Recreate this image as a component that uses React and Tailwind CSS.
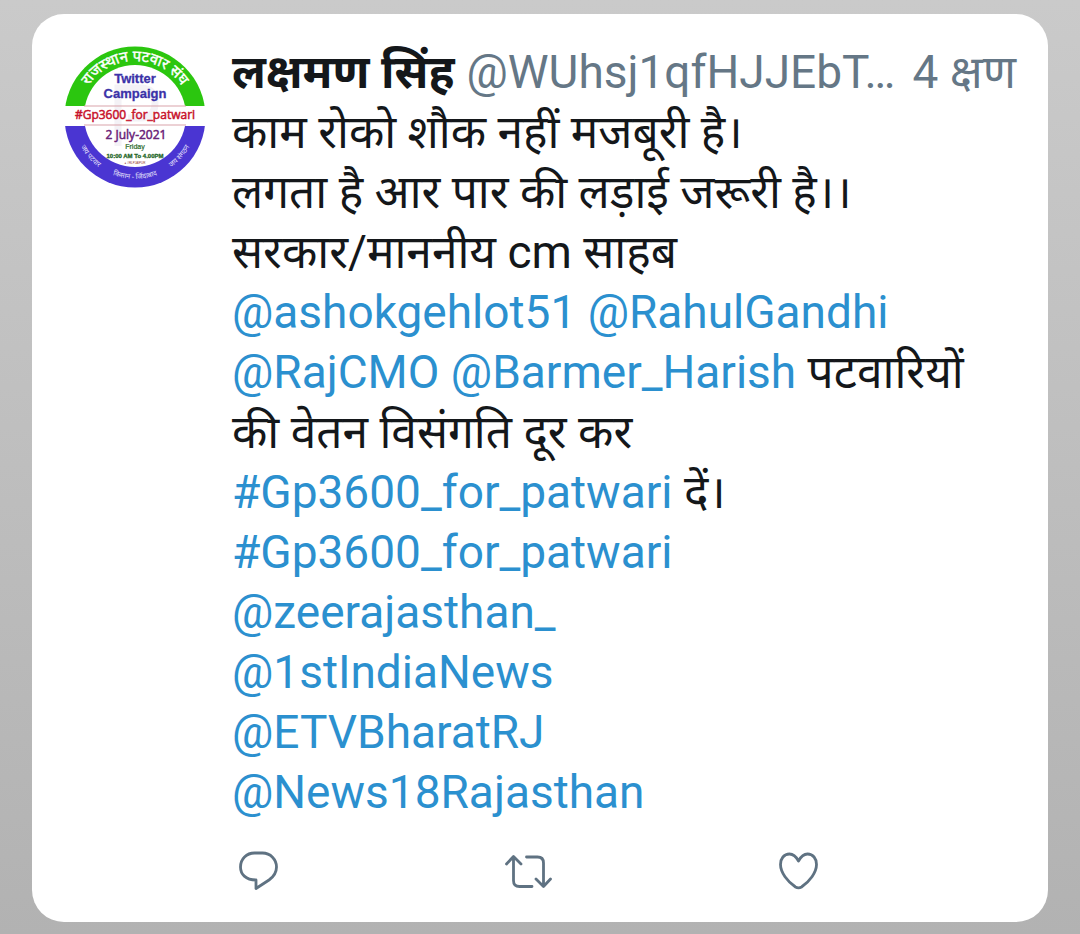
import React from "react";

function Mention({ children }) {
  return (
    <a href="#mention" className="text-[#2b90cf]">
      {children}
    </a>
  );
}

function CampaignAvatar() {
  return (
    <svg viewBox="0 0 142 142" className="block size-[142px] shrink-0" role="img" aria-label="Twitter Campaign">
      <defs>
        <clipPath id="disc">
          <circle cx="71" cy="71" r="70.5" />
        </clipPath>
        <path id="topArc" d="M15 71 A56 56 0 0 1 127 71" />
        <path id="bottomArc" d="M9 71 A62 62 0 0 0 133 71" />
      </defs>
      <g clipPath="url(#disc)">
        <rect width="142" height="142" fill="#fff" />
        <rect width="142" height="60" fill="#2bc60f" />
        <rect y="80" width="142" height="62" fill="#4a35d2" />
        <circle cx="71" cy="70" r="51" fill="#fff" />
        <rect y="60" width="142" height="20" fill="#fff" />
      </g>
      <path d="M54 100V42H76Q91 42 91 57T76 72H64" fill="none" stroke="#f4f2f6" strokeWidth="7" />
      <path d="M20 60H122M20 79H122" stroke="#d9a3aa" strokeWidth="1" />
      <g fontFamily="'Noto Sans', sans-serif" fill="#fff" textAnchor="middle">
        <text fontSize="15" stroke="#fff" strokeWidth="0.4">
          <textPath href="#topArc" startOffset="50%">राजस्थान पटवार संघ</textPath>
        </text>
        <g fontSize="7" fill="#e4e0fa">
          <text>
            <textPath href="#bottomArc" startOffset="23%">जय पटवार</textPath>
          </text>
          <text>
            <textPath href="#bottomArc" startOffset="50%">किसान - जिंदाबाद</textPath>
          </text>
          <text>
            <textPath href="#bottomArc" startOffset="77%">जय संगठन</textPath>
          </text>
        </g>
      </g>
      <g textAnchor="middle">
        <g fontFamily="'Liberation Sans', sans-serif" fontWeight="700" fontSize="13" fill="#3b32a8" stroke="#3b32a8" strokeWidth="0.3">
          <text x="71" y="37">Twitter</text>
          <text x="71" y="52">Campaign</text>
        </g>
        <g fontFamily="'Open Sans', sans-serif" fontSize="12" strokeWidth="0.5">
          <text x="71" y="73" fill="#c8142c" stroke="#c8142c">#Gp3600_for_patwari</text>
          <text x="72" y="93" fill="#6b2479" stroke="#6b2479">2 July-2021</text>
        </g>
        <g fontFamily="'Liberation Sans', sans-serif" fill="#27682a">
          <text x="71" y="103" fontSize="7" stroke="#27682a" strokeWidth="0.2">Friday</text>
          <text x="71" y="112" fontSize="6" fontWeight="700" stroke="#27682a" strokeWidth="0.3">10:00 AM To 4.00PM</text>
          <text x="71" y="118" fontSize="3" fill="#95382e">● #RLPJAIPUR</text>
        </g>
      </g>
    </svg>
  );
}

const iconProps = {
  fill: "none",
  stroke: "currentColor",
  strokeWidth: 2.8,
  strokeLinecap: "round",
  strokeLinejoin: "round",
  className: "block h-10 w-[52px]",
  viewBox: "0 0 52 40",
};

export default function App() {
  return (
    <main className="min-h-screen bg-linear-to-b from-[#cacaca] to-[#b2b2b2] px-8 pt-[14px] pb-3">
      <article className="flex gap-[26px] rounded-[32px] bg-white px-8 pt-7 pb-8 font-['Roboto','Noto_Sans',sans-serif] text-[46px] leading-[60px] text-[#14171a]">
        <div className="pt-1">
          <CampaignAvatar />
        </div>
        <div className="min-w-0 flex-1">
          <header className="flex items-baseline whitespace-nowrap">
            <h1 className="shrink-0 font-bold">लक्षमण सिंह</h1>
            <span className="ml-3 min-w-0 text-[#657786]">@WUhsj1qfHJJEbT…</span>
            <time className="ml-auto shrink-0 text-[#657786]">4 क्षण</time>
          </header>
          <p>
            काम रोको शौक नहीं मजबूरी है।
            <br />
            लगता है आर पार की लड़ाई जरूरी है।।
            <br />
            सरकार/माननीय cm साहब
            <br />
            <Mention>@ashokgehlot51</Mention> <Mention>@RahulGandhi</Mention>
            <br />
            <Mention>@RajCMO</Mention> <Mention>@Barmer_Harish</Mention> पटवारियों
            <br />
            की वेतन विसंगति दूर कर
            <br />
            <Mention>#Gp3600_for_patwari</Mention> दें।
            <br />
            <Mention>#Gp3600_for_patwari</Mention>
            <br />
            <Mention>@zeerajasthan_</Mention>
            <br />
            <Mention>@1stIndiaNews</Mention>
            <br />
            <Mention>@ETVBharatRJ</Mention>
            <br />
            <Mention>@News18Rajasthan</Mention>
          </p>
          <footer className="mt-7 grid grid-cols-[repeat(2,270px)_auto] justify-start text-[#5f7282]">
            <button type="button" aria-label="Reply">
              <svg {...iconProps}>
                <path d="M22.500 3H30.500C38.500 3 44.500 9.500 44.500 17C44.500 22.500 42 26.500 37 30L24 38.500V30C13.500 30 8.500 24 8.500 17C8.500 9 14.500 3 22.500 3Z" />
              </svg>
            </button>
            <button type="button" aria-label="Retweet">
              <svg {...iconProps}>
                <path d="M4.500 14L11.500 6.500L19 14M11.500 7.500V30.500Q11.500 36.500 17.500 36.500H30M24.500 7H35.500Q41.500 7 41.500 13V36M34 29L41.500 36.500L48.500 29" />
              </svg>
            </button>
            <button type="button" aria-label="Like">
              <svg {...iconProps}>
                <path d="M26.500 11C24 6.500 21 4 17.500 4C12 4 8.500 8.500 8.500 14.500C8.500 22.500 15.500 31.500 23.500 37Q26.500 38.800 29.500 37C37.500 31.500 44.500 22.500 44.500 14.500C44.500 8.500 41 4 35.500 4C32 4 29 6.500 26.500 11Z" />
              </svg>
            </button>
          </footer>
        </div>
      </article>
    </main>
  );
}
